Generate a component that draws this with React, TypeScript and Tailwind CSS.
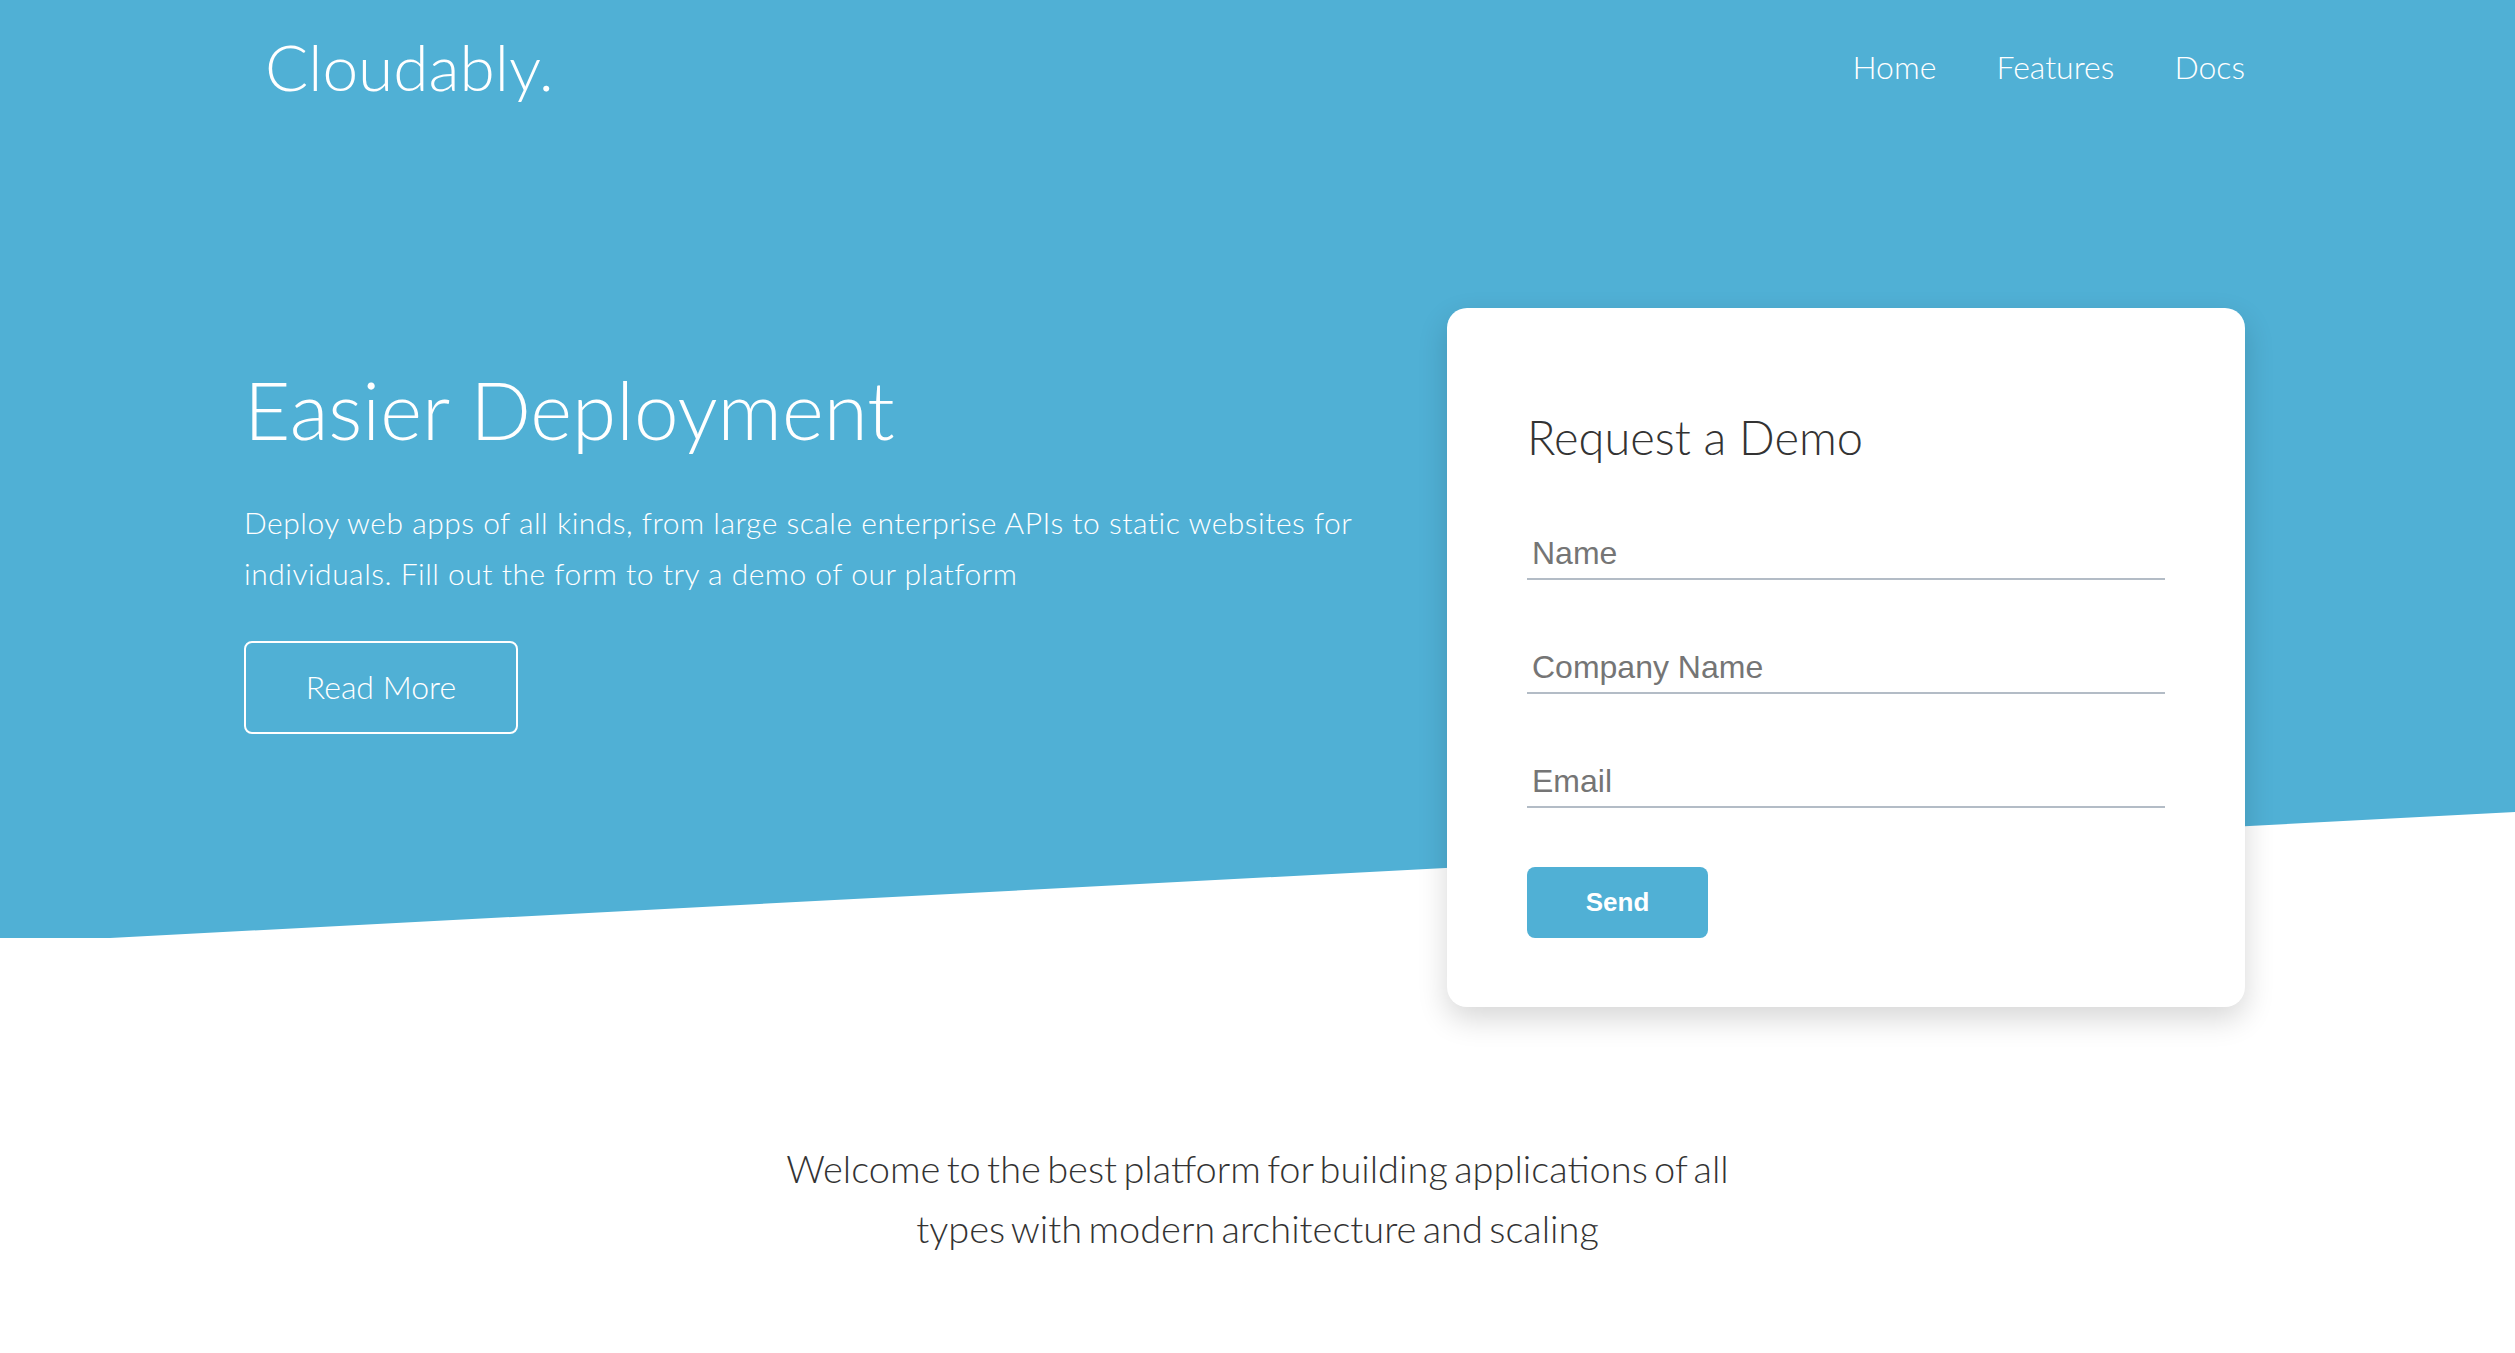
import React from "react";

const inputCls =
  "block h-[52px] w-full border-b-2 border-[#b3bcc6] bg-transparent px-[5px] py-0 text-[32px] leading-normal text-[#333] outline-none placeholder:text-[#757575]";

export default function App() {
  return (
    <div className="min-h-[1353px] w-full bg-white" style={{ fontFamily: "Lato, 'Noto Sans', sans-serif" }}>
      <section className="relative">
        <div className="absolute left-0 top-0 h-[938px] w-full bg-[#50b0d5] [clip-path:polygon(0_0,100%_0,100%_812px,110px_938px,0_938px)]" />
        <div className="relative pl-[244px] pr-[270px]">
          <header className="flex items-center justify-between pt-[29px]">
            <div className="ml-[21px] text-[64px] font-light leading-[1.2] text-white">Cloudably.</div>
            <nav className="flex items-center gap-[60px] text-[32px] font-light leading-[1.2] text-white">
              <a href="#">Home</a>
              <a href="#">Features</a>
              <a href="#">Docs</a>
            </nav>
          </header>

          <div className="mt-[202px] flex items-start justify-between">
            <div className="flex-1 pt-[53px]">
              <h1 className="text-[80px] font-light leading-[1.2] text-white">Easier Deployment</h1>
              <p className="mt-[40px] max-w-[1150px] text-[30px] font-light leading-[51px] tracking-[0.5px] text-white">
                Deploy web apps of all kinds, from large scale enterprise APIs to static websites for individuals. Fill out the form to try a demo of our platform
              </p>
              <button className="mt-[42px] flex h-[93px] w-[274px] items-center justify-center rounded-[8px] border-2 border-white text-[32px] font-light text-white">
                Read More
              </button>
            </div>

            <div className="w-[798px] rounded-[20px] bg-white pb-[69px] pl-[80px] pr-[80px] pt-[101px] shadow-[0_12px_30px_rgba(0,0,0,0.16)]">
              <h2 className="text-[47px] font-light leading-[1.2] text-[#333333]">Request a Demo</h2>
              <form className="mt-[63px] flex flex-col" onSubmit={(e) => e.preventDefault()}>
                <input
                  placeholder="Name"
                  className={inputCls}
                  style={{ fontFamily: "'Liberation Sans', Arial, sans-serif" }}
                />
                <input
                  placeholder="Company Name"
                  className={"mt-[62px] " + inputCls}
                  style={{ fontFamily: "'Liberation Sans', Arial, sans-serif" }}
                />
                <input
                  placeholder="Email"
                  className={"mt-[62px] " + inputCls}
                  style={{ fontFamily: "'Liberation Sans', Arial, sans-serif" }}
                />
                <button
                  type="submit"
                  className="mt-[59px] flex h-[71px] w-[181px] items-center justify-center rounded-[8px] bg-[#50b0d5] text-[26px] font-bold text-white"
                  style={{ fontFamily: "'Liberation Sans', Arial, sans-serif" }}
                >
                  Send
                </button>
              </form>
            </div>
          </div>
        </div>
      </section>

      <section className="mt-[131px] flex justify-center pb-[100px]">
        <p className="max-w-[1000px] text-center text-[38px] font-light leading-[60px] text-[#333333] [word-spacing:-4px]">
          Welcome to the best platform for building applications of all types with modern architecture and scaling
        </p>
      </section>
    </div>
  );
}
